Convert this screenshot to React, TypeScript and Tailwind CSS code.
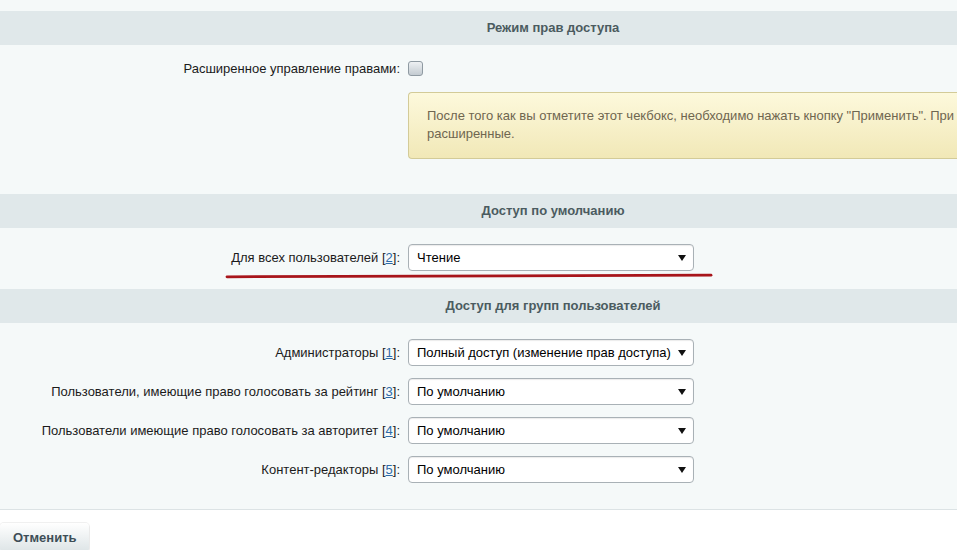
const groups = [
  { label: 'Администраторы', id: 1, value: 'Полный доступ (изменение прав доступа)' },
  { label: 'Пользователи, имеющие право голосовать за рейтинг', id: 3, value: 'По умолчанию' },
  { label: 'Пользователи имеющие право голосовать за авторитет', id: 4, value: 'По умолчанию' },
  { label: 'Контент-редакторы', id: 5, value: 'По умолчанию' },
];

const SectionHeader = ({ title }: { title: string }) => (
  <div className="h-[34px] bg-[#e0e8ea] flex items-center justify-center pl-[149px]">
    <span className="font-bold text-[13px] text-[#4b5b60]">{title}</span>
  </div>
);

const FakeSelect = ({ value }: { value: string }) => (
  <div className="w-[286px] h-[27px] bg-white border border-[#a9b1b6] rounded-[4px] shadow-[inset_0_1px_1px_rgba(0,0,0,0.08)] flex items-center justify-between pl-[8px] pr-[7px]">
    <span className="text-[13px] text-black">{value}</span>
    <svg width="8" height="6" viewBox="0 0 8 6">
      <path d="M0 0 L8 0 L4 6 Z" fill="#111" />
    </svg>
  </div>
);

const RefLink = ({ n }: { n: number }) => (
  <>
    [<span className="text-[#2c6aa8] underline">{n}</span>]:
  </>
);

const Row = ({ label, children }: { label: React.ReactNode; children: React.ReactNode }) => (
  <div className="flex items-center">
    <div className="w-[404px] pr-[4px] text-right text-[13px] leading-[19px] text-[#1b1b1b]">{label}</div>
    <div className="pl-[4px] flex items-center">{children}</div>
  </div>
);

export default function App() {
  return (
    <div className="w-[957px] h-[550px] overflow-hidden bg-white relative font-['Liberation_Sans',Arial,sans-serif]">
      <div className="bg-[#f5f9f9] pt-[11px] border-b border-[#dce3e5]">
        <SectionHeader title="Режим прав доступа" />
        <div className="pt-[14px] pb-[35px]">
          <Row label="Расширенное управление правами:">
            <div className="w-[15px] h-[15px] rounded-[3px] border border-[#8f9aa2] bg-gradient-to-b from-[#eef1f3] to-[#c3cbd1]" />
          </Row>
          <div className="ml-[408px] mt-[14px] h-[67px] border border-[#d3cb98] border-r-0 rounded-l-[4px] bg-gradient-to-b from-[#fdf9dc] to-[#f1e8b7] pl-[18px] pt-[14px] text-[13px] leading-[18px] text-[#6f6650] whitespace-nowrap">
            <div>После того как вы отметите этот чекбокс, необходимо нажать кнопку "Применить". При</div>
            <div>расширенные.</div>
          </div>
        </div>

        <SectionHeader title="Доступ по умолчанию" />
        <div className="pt-[16px] pb-[18px]">
          <Row label={<>Для всех пользователей <RefLink n={2} /></>}>
            <FakeSelect value="Чтение" />
          </Row>
        </div>

        <SectionHeader title="Доступ для групп пользователей" />
        <div className="pt-[16px] pb-[26px] flex flex-col gap-[12px]">
          {groups.map((g) => (
            <Row key={g.id} label={<>{g.label} <RefLink n={g.id} /></>}>
              <FakeSelect value={g.value} />
            </Row>
          ))}
        </div>
      </div>

      <div className="pt-[13px]">
        <button className="h-[29px] w-[89px] rounded-[4px] bg-gradient-to-b from-white to-[#dde4e6] shadow-[0_1px_1px_rgba(0,0,0,0.25),0_0_0_1px_rgba(0,0,0,0.06)] text-left pl-[13px] text-[13px] font-bold text-[#3e4e57]">
          Отменить
        </button>
      </div>

      <svg className="absolute left-[224px] top-[272px]" width="490" height="8" viewBox="0 0 490 8">
        <path d="M3 4.8 C 120 3.8, 300 3.5, 487 3.2" stroke="#a8151b" strokeWidth="2.8" fill="none" strokeLinecap="round" />
      </svg>
    </div>
  );
}
